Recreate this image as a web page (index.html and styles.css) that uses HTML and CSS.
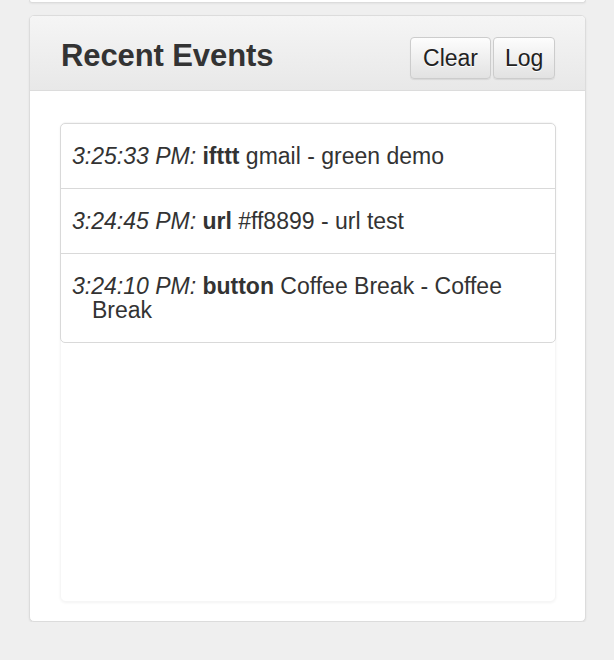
FILE: index.html
```html
<!DOCTYPE html>
<html>
<head>
<meta charset="utf-8">
<link rel="stylesheet" href="styles.css">
</head>
<body>
<div class="page">
  <div class="prev-panel"></div>
  <div class="panel">
    <div class="panel-heading">
      <h3 class="panel-title">Recent Events</h3>
      <div class="btn-group">
        <button class="btn btn-clear">Clear</button>
        <button class="btn btn-log">Log</button>
      </div>
    </div>
    <div class="panel-body">
      <div class="well">
        <ul class="list-group">
          <li class="list-item"><em>3:25:33 PM:</em> <strong>ifttt</strong> <span>gmail - green demo</span></li>
          <li class="list-item"><em>3:24:45 PM:</em> <strong>url</strong> <span>#ff8899 - url test</span></li>
          <li class="list-item"><em>3:24:10 PM:</em> <strong>button</strong> <span>Coffee Break - Coffee</span> <span>Break</span></li>
        </ul>
      </div>
    </div>
  </div>
</div>
</body>
</html>
```

FILE: styles.css
```css
html, body {
  margin: 0;
  padding: 0;
  background: #efefef;
  font-family: "Liberation Sans", Arial, sans-serif;
  color: #333;
}

.page {
  padding: 0 28px 0 29px;
}

.prev-panel {
  height: 2px;
  background: #fff;
  border: 1px solid #dcdcdc;
  border-top: none;
  border-radius: 0 0 4px 4px;
  box-shadow: 0 1px 2px rgba(0,0,0,0.05);
  margin-bottom: 12px;
}

.panel {
  background: #fff;
  border: 1px solid #dcdcdc;
  border-radius: 5px;
  box-shadow: 0 1px 2px rgba(0,0,0,0.08);
  overflow: hidden;
}

.panel-heading {
  height: 75px;
  box-sizing: border-box;
  display: flex;
  align-items: flex-start;
  justify-content: space-between;
  padding: 0 30px 0 31px;
  background: linear-gradient(#f5f5f5, #e8e8e8);
  border-bottom: 1px solid #dcdcdc;
}

.panel-title {
  margin: 23px 0 0 0;
  font-size: 31px;
  line-height: 34px;
  font-weight: bold;
  color: #333;
  letter-spacing: -0.1px;
}

.btn-group {
  display: flex;
  gap: 2px;
  margin-top: 21px;
}

.btn {
  font-family: "Liberation Sans", Arial, sans-serif;
  font-size: 23px;
  color: #222;
  height: 42px;
  padding: 0 11px;
  border: 1px solid #ccc;
  border-radius: 4px;
  background: linear-gradient(#fdfdfd, #e2e2e2);
  text-shadow: 0 1px 0 #fff;
  box-shadow: 0 1px 1px rgba(0,0,0,0.08);
}

.btn-clear {
  width: 81px;
}

.btn-log {
  width: 62px;
}

.panel-body {
  padding: 31px 29px 19px 30px;
}

.well {
  height: 478px;
  background: #fff;
  border: 1px solid #f6f6f6;
  border-radius: 6px;
  box-shadow: 0 1px 3px rgba(0,0,0,0.05);
}

.list-group {
  list-style: none;
  margin: 0;
  padding: 0;
  border: 1px solid #d9d9d9;
  border-radius: 5px;
  margin: 0 -1px;
}

.list-item {
  font-size: 23px;
  line-height: 24px;
  padding: 20px 10px 20px 31px;
  text-indent: -20px;
  border-top: 1px solid #d9d9d9;
}

.list-item:first-child {
  border-top: none;
}

.list-item strong {
  font-weight: bold;
}

.list-item em {
  font-style: italic;
}
```
